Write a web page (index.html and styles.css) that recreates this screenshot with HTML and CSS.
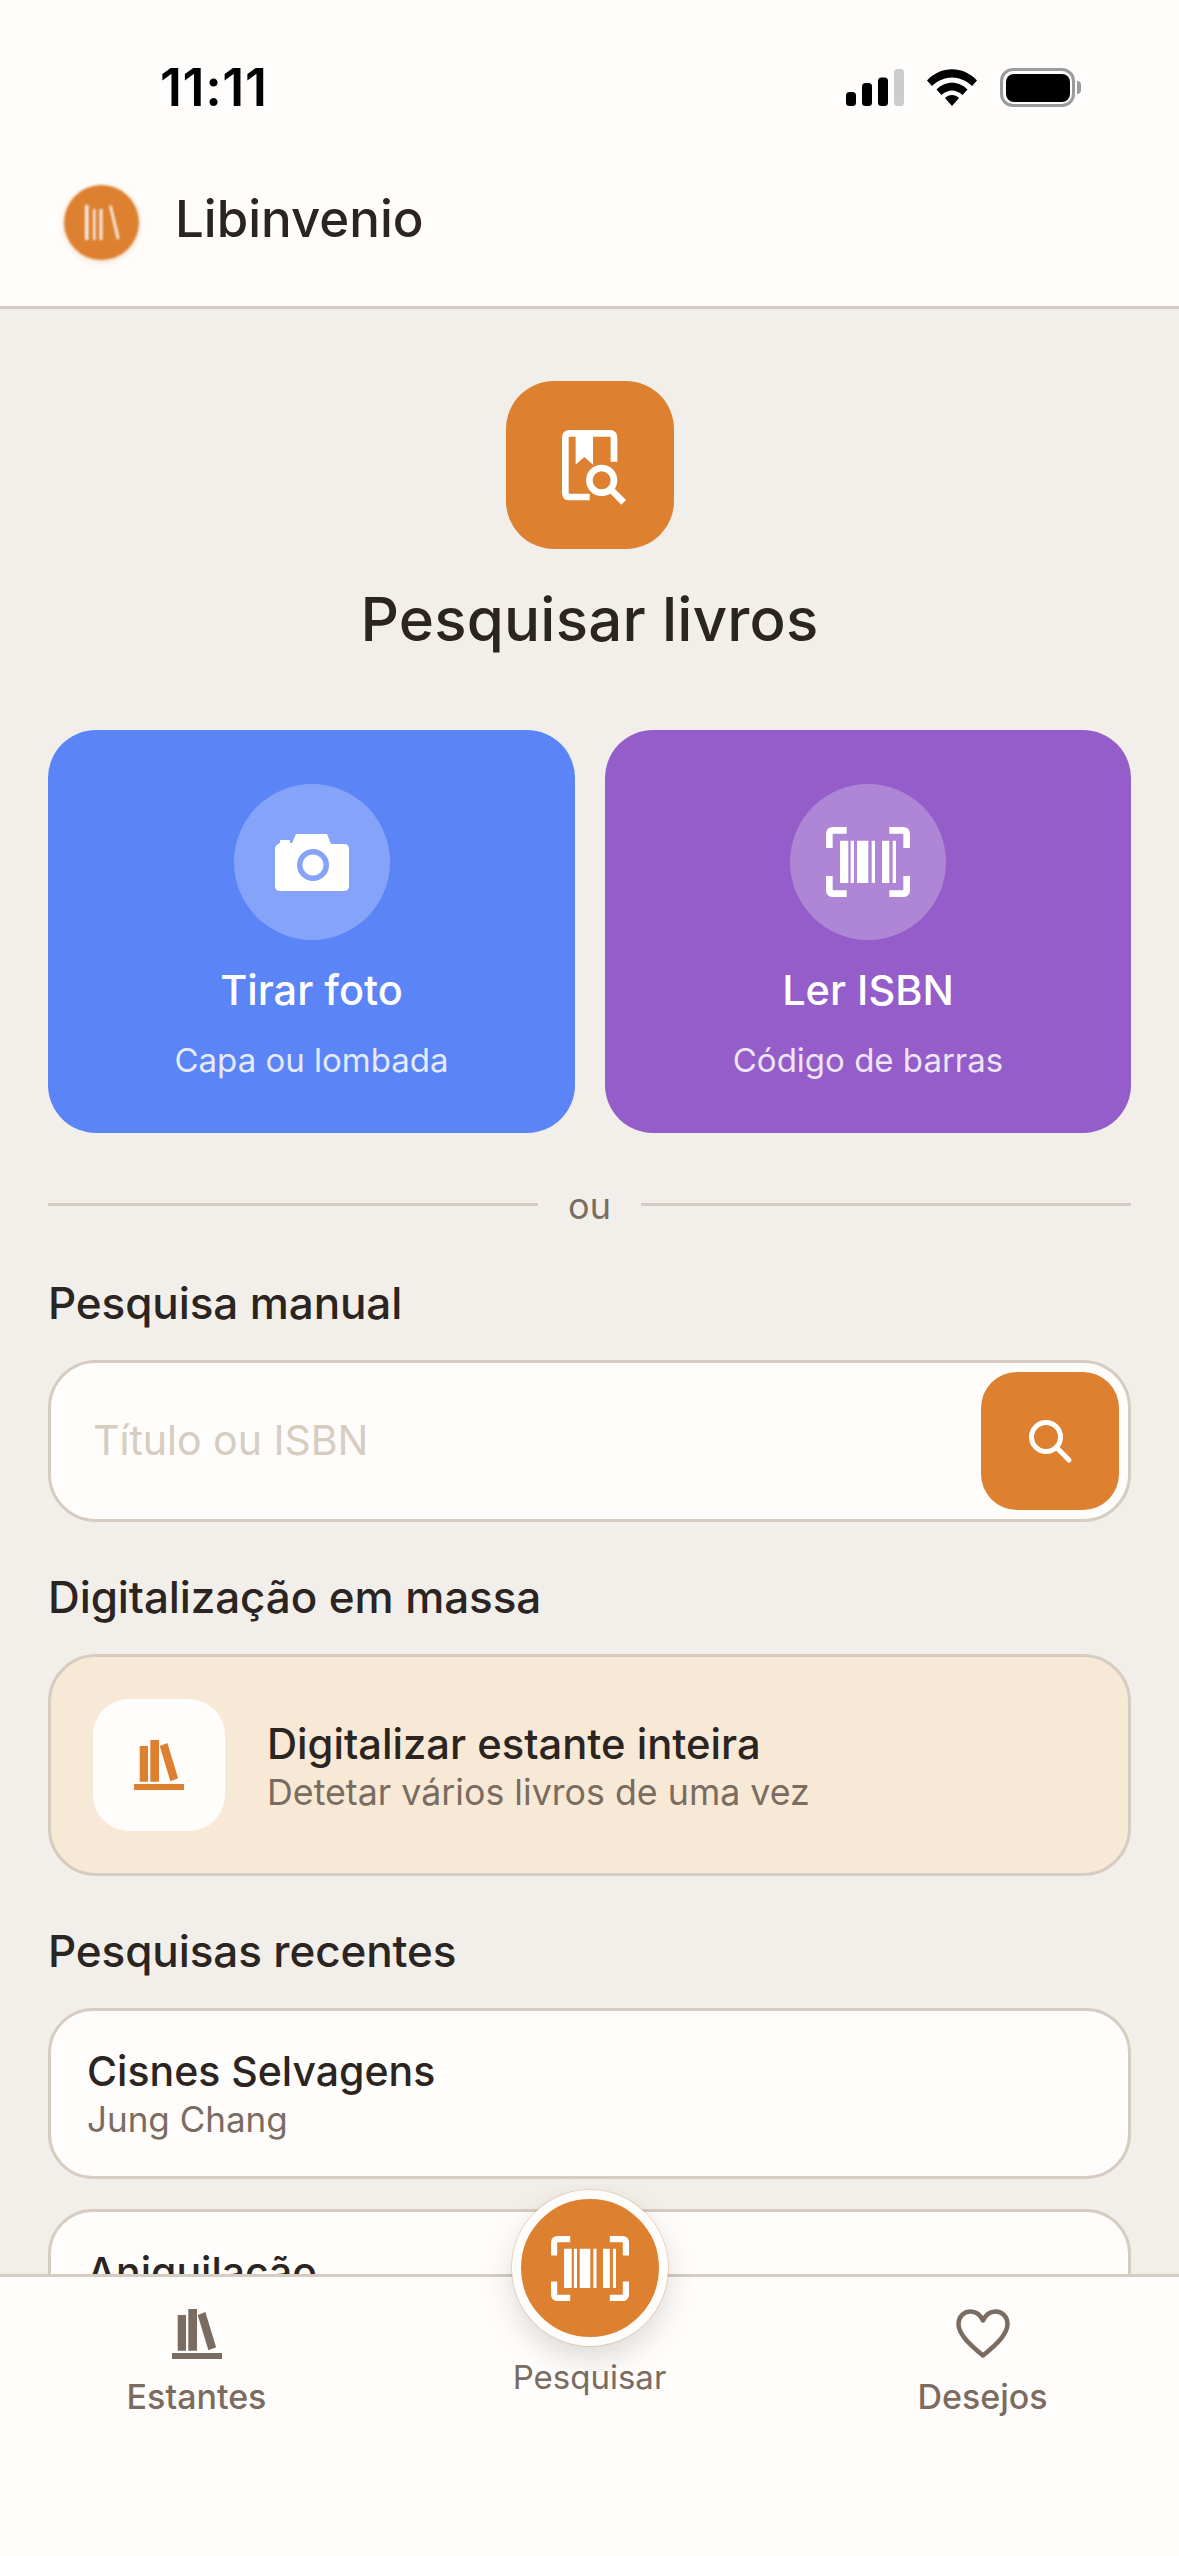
FILE: index.html
```html
<!DOCTYPE html>
<html lang="pt">
<head>
<meta charset="utf-8">
<title>Libinvenio</title>
<link rel="stylesheet" href="styles.css">
</head>
<body>
<svg class="defs" width="0" height="0" aria-hidden="true">
  <symbol id="barcode" viewBox="0 0 252 210">
    <path fill="none" stroke="currentColor" stroke-width="20" d="M62 10H22Q10 10 10 22V63M190 10H230Q242 10 242 22V63M62 200H22Q10 200 10 188V147M190 200H230Q242 200 242 188V147"/>
    <path fill="currentColor" d="M42 41h25v127H42zM74 41h10v127H74zM93 41h34v127H93zM137 41h10v127h-10zM168 41h22v127h-22zM200 41h10v127h-10z"/>
  </symbol>
  <symbol id="books" viewBox="0 0 50 50">
    <path fill="currentColor" d="M5.700 6h8.300v35.700H5.700zM16.300 0h8.700v41.700h-8.700zM25.700 6l7.700-3 10.700 35.300-7.700 3zM0 44h50v6H0z"/>
  </symbol>
</svg>
<div class="app">
  <div class="topbar">
    <div class="status">
      <span class="time">11:11</span>
      <div class="status-icons">
        <svg class="signal" width="58" height="37" viewBox="0 0 58 37">
          <rect x="0" y="23" width="10" height="14" rx="3.500"/>
          <rect x="16" y="14" width="10" height="23" rx="3.500"/>
          <rect x="32" y="8.500" width="10" height="28.500" rx="3.500"/>
          <rect class="off" x="48" y="0" width="10" height="37" rx="3.500"/>
        </svg>
        <svg class="wifi" width="50" height="37" viewBox="0 0 50 37">
          <path d="M0 11.500C14-3.500 36-3.500 50 11.500L45 17C33 5.500 17 5.500 5 17z"/>
          <path d="M9.500 20.500C18 11.500 32 11.500 40.500 20.500L35.500 26C29 20 21 20 14.500 26z"/>
          <path d="M18 29C22 25 28 25 32 29L25 37z"/>
        </svg>
        <div class="battery"><span class="battery-fill"></span><span class="battery-nub"></span></div>
      </div>
    </div>
    <header class="brand">
      <div class="logo">
        <svg width="36" height="36" viewBox="0 0 36 36"><path fill="#fff" fill-opacity=".85" d="M1 0h3.500v35H1zM9 4h2.500v31H9zM15.500 4h3v31h-3zM25 1l2.500-1 8 33-2.500 2z"/></svg>
      </div>
      <span class="brand-name">Libinvenio</span>
    </header>
  </div>

  <main class="content">
    <div class="hero">
      <div class="hero-tile">
        <svg class="hero-icon" width="64" height="75" viewBox="367 271 192 225">
          <path fill="none" stroke="#fff" stroke-width="20" d="M450 472H390Q377 472 377 459V294Q377 281 390 281H510Q523 281 523 294V366"/>
          <path fill="#fff" d="M408 285H460V375L434 352L408 375z"/>
          <circle cx="486" cy="422" r="37" fill="none" stroke="#fff" stroke-width="20"/>
          <path stroke="#fff" stroke-width="20" d="M512 448L552 488"/>
        </svg>
      </div>
      <h1 class="hero-title">Pesquisar livros</h1>
    </div>

    <div class="actions">
      <div class="action action-blue">
        <div class="action-circle">
          <svg width="74" height="57" viewBox="0 0 74 57">
            <path fill="#fff" d="M21 0H52L56 10H69Q74 10 74 15V52Q74 57 69 57H5Q0 57 0 52V15Q0 11 5 9V6H15V9H17z"/>
            <circle cx="38" cy="31" r="13.300" fill="none" stroke="#85A3F8" stroke-width="5.500"/>
          </svg>
        </div>
        <div class="action-title">Tirar foto</div>
        <div class="action-sub">Capa ou lombada</div>
      </div>
      <div class="action action-purple">
        <div class="action-circle">
          <svg class="bar-lg" width="84" height="70"><use href="#barcode"/></svg>
        </div>
        <div class="action-title">Ler ISBN</div>
        <div class="action-sub">Código de barras</div>
      </div>
    </div>

    <div class="divider"><span class="rule"></span><span class="divider-text">ou</span><span class="rule"></span></div>

    <h2 class="section-title section-manual">Pesquisa manual</h2>
    <div class="search">
      <span class="placeholder">Título ou ISBN</span>
      <div class="search-btn">
        <svg width="46" height="46" viewBox="0 0 46 46"><circle cx="19" cy="19" r="14.500" fill="none" stroke="#fff" stroke-width="5"/><path stroke="#fff" stroke-width="5" stroke-linecap="round" d="M30 30L42 42"/></svg>
      </div>
    </div>

    <h2 class="section-title section-bulk">Digitalização em massa</h2>
    <div class="bulk">
      <div class="bulk-tile"><svg class="books-orange" width="50" height="50"><use href="#books"/></svg></div>
      <div class="bulk-text">
        <div class="bulk-title">Digitalizar estante inteira</div>
        <div class="bulk-sub">Detetar vários livros de uma vez</div>
      </div>
    </div>

    <h2 class="section-title section-recent">Pesquisas recentes</h2>
    <div class="recent recent-first">
      <div class="recent-title">Cisnes Selvagens</div>
      <div class="recent-sub">Jung Chang</div>
    </div>
    <div class="recent">
      <div class="recent-title">Aniquilação</div>
    </div>
  </main>

  <nav class="tabbar">
    <div class="tab">
      <svg class="books-muted" width="50" height="50"><use href="#books"/></svg>
      <span class="tab-label">Estantes</span>
    </div>
    <div class="tab">
      <span class="tab-label tab-label-center">Pesquisar</span>
    </div>
    <div class="tab">
      <svg class="heart" width="54" height="50" viewBox="0 0 54 50"><path fill="none" stroke="#7A6C60" stroke-width="4.500" stroke-linejoin="round" d="M27 11.500C24 5 19 2.500 14.500 2.500C7.500 2.500 2.500 8 2.500 15C2.500 25 13 35 27 46.500C41 35 51.500 25 51.500 15C51.500 8 46.500 2.500 39.500 2.500C35 2.500 30 5 27 11.500z"/></svg>
      <span class="tab-label">Desejos</span>
    </div>
    <div class="fab"><svg class="bar-sm" width="78" height="65"><use href="#barcode"/></svg></div>
  </nav>
</div>
</body>
</html>
```
FILE: styles.css
```css
* { box-sizing: border-box; }
html, body { margin: 0; padding: 0; }
body { font-family: Inter, "Noto Sans", sans-serif; color: #2B2420; background: #FFFDFB; }
.defs { position: absolute; }
.app { width: 1179px; height: 2556px; display: flex; flex-direction: column; overflow: hidden; background: #FFFDFB; }

.topbar { height: 309px; flex: none; background: #FFFDFB; border-bottom: 3px solid #D6CCC0; }
.status { display: flex; justify-content: space-between; align-items: center; height: 37px; margin-top: 69px; padding: 0 99px 0 160px; }
.time { font-size: 52px; font-weight: 600; color: #000; letter-spacing: .6px; line-height: 37px; }
.status-icons { display: flex; align-items: center; gap: 23px; }
.signal rect { fill: #000; }
.signal .off { fill: #CCCCCC; }
.wifi path { fill: #000; }
.battery { position: relative; width: 75px; height: 39px; border: 3.500px solid #9B9B9B; border-radius: 13px; padding: 2.500px; margin-right: 5px; }
.battery-fill { display: block; height: 100%; background: #000; border-radius: 8px; }
.battery-nub { position: absolute; right: -9px; top: 10px; width: 4px; height: 13px; background: #9B9B9B; border-radius: 0 4px 4px 0; }
.brand { display: flex; align-items: center; gap: 36px; margin-top: 79px; padding-left: 64px; }
.logo { width: 75px; height: 75px; border-radius: 50%; background: #DD8030; display: flex; align-items: center; justify-content: center; filter: blur(1px); box-shadow: 0 2px 6px rgba(221,128,48,.25); }
.brand-name { font-size: 51px; font-weight: 450; line-height: 60px; margin-bottom: 8px; }

.content { flex: 1; min-height: 0; overflow: hidden; background: #F2EFEB; padding: 72px 48px 0; }
.hero { display: flex; flex-direction: column; align-items: center; }
.hero-tile { width: 168px; height: 168px; border-radius: 48px; background: #DD8030; display: flex; align-items: center; justify-content: center; }
.hero-icon { margin: 5px 0 0 8px; }
.hero-title { margin: 34px 0 0; font-size: 60px; font-weight: 450; letter-spacing: .2px; line-height: 72px; }

.actions { display: grid; grid-template-columns: 527px 526px; gap: 30px; margin-top: 75px; }
.action { height: 403px; border-radius: 48px; color: #fff; display: flex; flex-direction: column; align-items: center; padding-top: 54px; }
.action-blue { background: #5B85F7; }
.action-purple { background: #945DC9; }
.action-circle { width: 156px; height: 156px; border-radius: 50%; background: rgba(255,255,255,.25); display: flex; align-items: center; justify-content: center; }
.bar-lg { color: #fff; }
.action-title { margin-top: 25px; font-size: 41.500px; font-weight: 500; line-height: 50px; }
.action-sub { margin-top: 25px; font-size: 33px; line-height: 40px; color: rgba(255,255,255,.85); }

.divider { display: flex; align-items: center; margin-top: 55px; height: 32px; gap: 30px; }
.rule { flex: 1; height: 3px; background: #D6CCC0; }
.divider-text { font-size: 36px; line-height: 32px; color: #7A6C60; padding-top: 4px; }

.section-title { margin: 48px 0 0; font-size: 44px; font-weight: 450; letter-spacing: -.1px; line-height: 54px; }
.section-manual { margin-top: 56px; }
.search { position: relative; display: flex; align-items: center; justify-content: space-between; margin-top: 30px; height: 162px; border: 3px solid #D6CCC0; border-radius: 48px; background: #FFFDFB; padding: 0 9px 0 42px; }
.placeholder { font-size: 41px; color: #D6CCC0; padding-bottom: 2px; }
.search-btn { width: 138px; height: 138px; border-radius: 36px; background: #DD8030; display: flex; align-items: center; justify-content: center; }
.section-bulk { margin-top: 48px; }
.bulk { display: flex; align-items: center; gap: 42px; margin-top: 30px; height: 222px; border: 3px solid #D6CCC0; border-radius: 48px; background: #F8E9D7; padding-left: 42px; }
.bulk-tile { width: 132px; height: 132px; border-radius: 36px; background: #FFFDFB; display: flex; align-items: center; justify-content: center; }
.books-orange { color: #DD8030; }
.books-muted { color: #7A6C60; }
.bulk-text { padding-top: 3px; }
.bulk-title { font-size: 41.700px; font-weight: 500; line-height: 50px; }
.bulk-sub { font-size: 35.750px; line-height: 46px; color: #7A6C60; }
.section-recent { margin-top: 48px; }
.recent { margin: 30px 0 0; height: 171px; border: 3px solid #D6CCC0; border-radius: 45px; background: #FFFDFB; padding: 35px 36px 0; }
.recent-title { font-size: 41px; font-weight: 500; line-height: 50px; }
.recent-sub { font-size: 35px; line-height: 46px; color: #7A6C60; }

.tabbar { position: relative; flex: none; height: 282px; border-top: 3px solid #D6CCC0; background: #FFFDFB; display: grid; grid-template-columns: 393px 393px 393px; }
.tab { display: flex; flex-direction: column; align-items: center; padding-top: 32px; }
.tab-label { margin-top: 17px; font-size: 34px; font-weight: 500; line-height: 42px; color: #7A6C60; }
.tab-label-center { margin-top: 47px; font-size: 33px; font-weight: 400; }
.fab { position: absolute; left: 512px; top: -87px; width: 156px; height: 156px; border-radius: 50%; background: #DD8030; border: 9px solid #FFFDFB; color: #fff; display: flex; align-items: center; justify-content: center; box-shadow: 0 0 0 1px rgba(221,128,48,.25), 0 12px 30px rgba(0,0,0,.14); }
.bar-sm { color: #fff; }
```
